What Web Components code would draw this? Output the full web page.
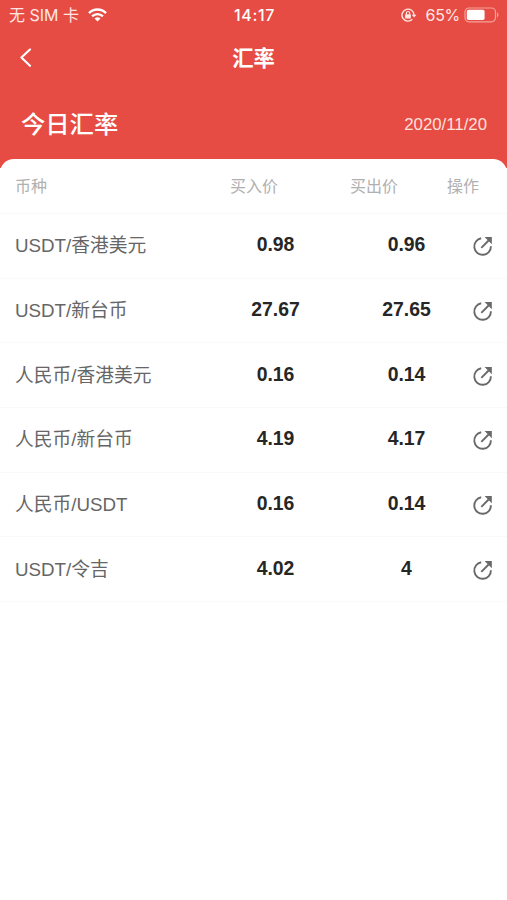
<!DOCTYPE html>
<html lang="zh-CN">
<head>
<meta charset="utf-8">
<meta name="viewport" content="width=device-width, initial-scale=1">
<title>汇率</title>
<style>
    body {
        margin: 0;
        background: #fff;
        font-family: "Liberation Sans", "Noto Sans CJK SC", sans-serif;
        --color-brand: #e64c43;
        --color-line: #f9f9f9;
    }
</style>
</head>
<body>
<rate-page>
    <status-bar slot="top" carrier="无 SIM 卡" time="14:17" battery="65"></status-bar>
    <nav-bar slot="top">汇率</nav-bar>
    <rate-banner slot="top" date="2020/11/20">今日汇率</rate-banner>
    <rate-head></rate-head>
    <rate-row buy="0.98" sell="0.96">USDT/香港美元</rate-row>
    <rate-row buy="27.67" sell="27.65">USDT/新台币</rate-row>
    <rate-row buy="0.16" sell="0.14">人民币/香港美元</rate-row>
    <rate-row buy="4.19" sell="4.17">人民币/新台币</rate-row>
    <rate-row buy="0.16" sell="0.14">人民币/USDT</rate-row>
    <rate-row buy="4.02" sell="4">USDT/令吉</rate-row>
</rate-page>

<script>
class BaseElement extends HTMLElement {

    constructor() {
        super();
        this.attachShadow({ mode: 'open' });
    }

    connectedCallback() {
        const template = document.createElement('template');
        template.innerHTML = this.render();
        this.shadowRoot.replaceChildren(template.content.cloneNode(true));
    }
}

class RatePage extends BaseElement {
    render() {
        return `
<style>
    :host {
        display: block;
        min-height: 900px;
        background: linear-gradient(var(--color-brand) 168px, #fff 168px);
    }

    .top {
        height: 158.5px;
    }

    .card {
        background: #fff;
        border-radius: 14px 14px 0 0;
    }
</style>
<div class="top"><slot name="top"></slot></div>
<div class="card"><slot></slot></div>`;
    }
}

class StatusBar extends BaseElement {
    render() {
        return `
<style>
    :host {
        display: grid;
        grid-template-columns: 1fr auto 1fr;
        align-items: center;
        height: 30px;
        padding: 0 7px 0 9px;
        color: #ffe6e3;
        font: 16px/30px Inter, "Noto Sans CJK SC", sans-serif;
    }

    .left, .right {
        display: flex;
        align-items: center;
    }

    .left svg {
        margin-left: 9px;
    }

    .right {
        justify-content: flex-end;
    }

    .time {
        color: #fff;
        font-weight: 500;
        letter-spacing: 0.6px;
    }

    .lock {
        margin-right: 9px;
    }

    .percent {
        letter-spacing: -0.3px;
    }

    .battery {
        margin-left: 4px;
    }
</style>
<div class="left">
    <span>${this.getAttribute('carrier')}</span>
    <svg width="19" height="14" viewBox="0 0 19 14" fill="none" stroke="#fff" stroke-width="2.4">
        <path d="M1 5.1a12 12 0 0 1 17 0"/>
        <path d="M4.1 8.4a7.6 7.6 0 0 1 10.8 0"/>
        <path d="M9.5 13.6 6.5 10.6a4.3 4.3 0 0 1 6 0z" fill="#fff" stroke="none"/>
    </svg>
</div>
<span class="time">${this.getAttribute('time')}</span>
<div class="right">
    <svg class="lock" width="16" height="14" viewBox="0 0 16 14" fill="none" stroke="#ffe6e3" stroke-width="1.4">
        <path d="M11.3 11.3A6 6 0 1 1 13 7"/>
        <path d="M10.8 6.7h4.6L13.1 9.5z" fill="#ffe6e3" stroke="none"/>
        <rect x="4.1" y="6.2" width="5.8" height="4.2" rx=".6" fill="#ffe6e3" stroke="none"/>
        <path d="M5.4 6.4V5.1a1.6 1.6 0 0 1 3.2 0v1.3" stroke-width="1.2"/>
    </svg>
    <span class="percent">${this.getAttribute('battery')}%</span>
    <svg class="battery" width="36" height="16" viewBox="0 0 36 16">
        <rect x="1" y="1" width="30.5" height="13.8" rx="4" fill="none" stroke="#f3a29c" stroke-width="1.2"/>
        <rect x="2.8" y="2.8" width="17.8" height="10.2" rx="1.8" fill="#fff"/>
        <path d="M33 5.3q3 2.6 0 5.2z" fill="#f3a29c"/>
    </svg>
</div>`;
    }
}

class NavBar extends BaseElement {
    render() {
        return `
<style>
    :host {
        display: grid;
        grid-template-columns: 40px 1fr 40px;
        align-items: center;
        height: 56px;
        color: #fff;
        font-size: 21.3px;
        font-weight: 700;
        text-align: center;
    }

    svg {
        margin-left: 19px;
    }

    span {
        padding-bottom: 3px;
    }
</style>
<svg width="14" height="20" viewBox="0 0 14 20" fill="none" stroke="#fff" stroke-width="2.1" stroke-linecap="round" stroke-linejoin="round">
    <path d="M11 1.4 2.4 9.6l8.6 8.2"/>
</svg>
<span><slot></slot></span>`;
    }
}

class RateBanner extends BaseElement {
    render() {
        return `
<style>
    :host {
        display: flex;
        align-items: center;
        justify-content: space-between;
        height: 76px;
        padding: 0 20px 0 21px;
        color: #fff;
    }

    .title {
        padding-bottom: 3px;
        font-size: 24.3px;
        font-weight: 500;
    }

    .date {
        padding-top: 2px;
        color: #ffe0dd;
        font-size: 16.8px;
    }
</style>
<span class="title"><slot></slot></span>
<span class="date">${this.getAttribute('date')}</span>`;
    }
}

class RateHead extends BaseElement {
    render() {
        return `
<style>
    :host {
        display: grid;
        grid-template-columns: 215px 120px 97px 1fr;
        align-items: center;
        height: 55.5px;
        padding: 0 0 1px 15px;
        border-bottom: 1px solid var(--color-line);
        box-sizing: border-box;
        color: #b0b0b0;
        font-size: 16px;
    }
</style>
<span>币种</span>
<span>买入价</span>
<span>买出价</span>
<span>操作</span>`;
    }
}

class RateRow extends BaseElement {
    render() {
        return `
<style>
    :host {
        display: grid;
        grid-template-columns: 195px 131px 131px 1fr;
        align-items: center;
        height: 64.7px;
        padding-left: 15px;
        border-bottom: 1px solid var(--color-line);
        box-sizing: border-box;
    }

    .name {
        padding-bottom: 4px;
        color: #666;
        font-size: 18.75px;
        white-space: nowrap;
    }

    .price {
        padding-bottom: 2px;
        color: #262626;
        font-size: 19.4px;
        font-weight: 700;
        text-align: center;
    }

    svg {
        margin-top: 1px;
    }
</style>
<span class="name"><slot></slot></span>
<span class="price">${this.getAttribute('buy')}</span>
<span class="price">${this.getAttribute('sell')}</span>
<svg width="22" height="22" viewBox="0 0 22 22" fill="none" stroke="#696969" stroke-width="1.9">
    <path d="M9.2 3.3A8.3 8.3 0 1 0 18.9 11.2"/>
    <path d="M9.3 12.8 16.6 5.5"/>
    <path d="M12.6 2.1h7.2v7.2z" fill="#696969" stroke="none"/>
</svg>`;
    }
}

window.customElements.define('rate-page', RatePage);
window.customElements.define('status-bar', StatusBar);
window.customElements.define('nav-bar', NavBar);
window.customElements.define('rate-banner', RateBanner);
window.customElements.define('rate-head', RateHead);
window.customElements.define('rate-row', RateRow);
</script>
</body>
</html>
